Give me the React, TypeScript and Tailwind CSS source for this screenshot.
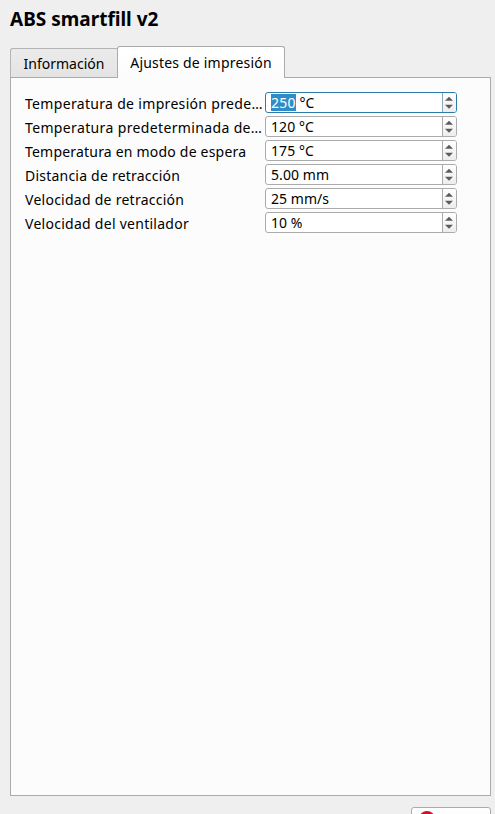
type Setting = { label: string; tracking: string; number: string; unit: string; focused?: boolean };

const settings: Setting[] = [
  { label: 'Temperatura de impresión prede…', tracking: 'tracking-[0.32px]', number: '250', unit: '°C', focused: true },
  { label: 'Temperatura predeterminada de…', tracking: 'tracking-[0.36px]', number: '120', unit: '°C' },
  { label: 'Temperatura en modo de espera', tracking: 'tracking-[0.2px]', number: '175', unit: '°C' },
  { label: 'Distancia de retracción', tracking: 'tracking-[0.22px]', number: '5.00', unit: 'mm' },
  { label: 'Velocidad de retracción', tracking: 'tracking-[0.26px]', number: '25', unit: 'mm/s' },
  { label: 'Velocidad del ventilador', tracking: 'tracking-[0.27px]', number: '10', unit: '%' },
];

function Arrows() {
  return (
    <svg className="block" width="13" height="19" viewBox="0 0 13 19" fill="#5c5c5c">
      <path d="M2 7.7L6 3.8L10 7.7Z" />
      <path d="M2 11.8L6 15.7L10 11.8Z" />
    </svg>
  );
}

function SpinBox({ number, unit, focused }: Setting) {
  return (
    <div
      className={`flex h-[21px] w-[192px] overflow-hidden rounded-[3px] border bg-white ${
        focused ? 'border-[#2c7cac]' : 'border-[#ababab]'
      }`}
    >
      <div className="flex flex-1 items-center pl-[5px] leading-[19px]">
        <span className={focused ? 'bg-[#308cc6] leading-[17px] tracking-[0.3px] text-white' : 'tracking-[0.1px]'}>
          {number}
        </span>
        <span className="whitespace-pre"> {unit}</span>
      </div>
      <div
        className={`w-[14px] shrink-0 border-l bg-linear-to-b from-white to-[#ededed] ${
          focused ? 'border-[#8aa9bc]' : 'border-[#ababab]'
        }`}
      >
        <Arrows />
      </div>
    </div>
  );
}

export default function App() {
  return (
    <div className="flex h-[814px] w-[495px] flex-col overflow-hidden bg-[#efefef] pl-[10px] font-['Noto_Sans','Open_Sans',sans-serif] text-[14px] text-black">
      <h1 className="h-[47px] shrink-0 pt-[6px] text-[19px] leading-[26px] font-bold whitespace-nowrap">ABS smartfill v2</h1>
      <div className="flex h-[31px] shrink-0 items-end">
        <div className="mb-px flex h-[29px] w-[107px] items-center justify-center rounded-tl-[3px] border border-r-0 border-b-0 border-[#b4b4b4] bg-linear-to-b from-[#ebebeb] to-[#e4e4e4] pt-px whitespace-nowrap">
          Información
        </div>
        <div className="z-10 flex h-[32px] w-[168px] shrink-0 items-center justify-center rounded-t-[3px] border border-b-0 border-[#ababab] bg-linear-to-b from-white to-[#fcfcfc] pb-px tracking-[0.2px] whitespace-nowrap">
          Ajustes de impresión
        </div>
      </div>
      <div className="-mt-px h-[719px] w-[481px] shrink-0 border border-[#ababab] bg-[#fcfcfc] pt-[14px] pl-[14px]">
        <div className="flex flex-col gap-[3px]">
          {settings.map((s) => (
            <div key={s.label} className="flex h-[21px]">
              <div className={`w-[240px] pt-[2px] leading-[19px] whitespace-nowrap ${s.tracking}`}>{s.label}</div>
              <SpinBox {...s} />
            </div>
          ))}
        </div>
      </div>
      <div className="mt-[11px] ml-[401px] h-[30px] w-[80px] shrink-0 rounded-[3px] border border-[#ababab] bg-linear-to-b from-white to-[#f2f2f2] pt-[3px] pl-[7px]">
        <div className="size-4 rounded-full bg-[#c9142c]" />
      </div>
    </div>
  );
}
